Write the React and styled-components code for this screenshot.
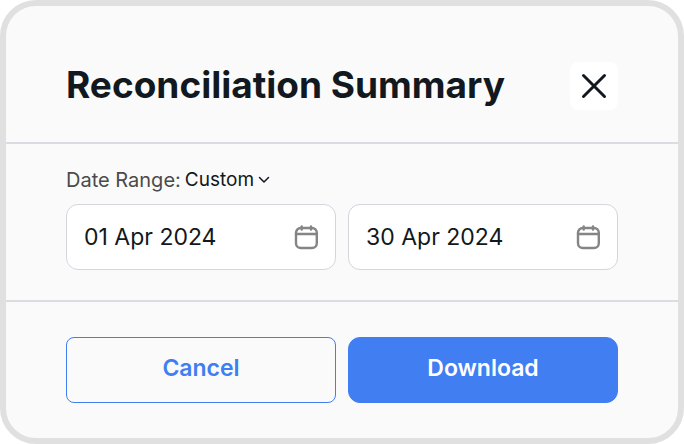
import React, { useState } from "react";
import styled, { createGlobalStyle } from "styled-components";

const GlobalStyle = createGlobalStyle`
  *, *::before, *::after { box-sizing: border-box; }
  body {
    margin: 0;
    background: #ffffff;
    color: #111820;
    font-family: Inter, "Open Sans", sans-serif;
  }
  button, input, select { font: inherit; color: inherit; }
`;

const Dialog = styled.section`
  border: 6px solid #e0e0e0;
  border-radius: 36px;
  background: #fafafa;
`;

const Header = styled.header`
  display: flex;
  align-items: flex-start;
  justify-content: space-between;
  padding: 56px 60px 32px;
  border-bottom: 2px solid #dbdbe1;
`;

const Title = styled.h1`
  margin: 0;
  font-size: 37px;
  line-height: 46px;
  font-weight: 700;
  white-space: nowrap;
`;

const CloseButton = styled.button`
  display: grid;
  place-items: center;
  width: 48px;
  height: 48px;
  padding: 0;
  border: 0;
  border-radius: 8px;
  background: #ffffff;
  cursor: pointer;
`;

const Body = styled.div`
  padding: 24px 60px 30px;
  border-bottom: 2px solid #dbdbe1;
`;

const RangeRow = styled.div`
  display: flex;
  align-items: center;
  gap: 4px;
  margin-bottom: 12px;
  font-size: 19px;
  line-height: 24px;
`;

const RangeLabel = styled.label`
  color: #4a4a4a;
  font-size: 20px;
`;

const RangePicker = styled.span`
  display: flex;
  align-items: center;
  gap: 4px;
`;

const RangeSelect = styled.select`
  appearance: none;
  field-sizing: content;
  height: 24px;
  padding: 0;
  border: 0;
  background: transparent;
  line-height: 24px;
  cursor: pointer;
`;

const Columns = styled.div`
  display: grid;
  grid-template-columns: repeat(2, minmax(0, 1fr));
  gap: 12px;
`;

const DateField = styled.div`
  display: flex;
  align-items: center;
  height: 66px;
  padding: 0 16px 0 17px;
  border: 1px solid #d5d5dd;
  border-radius: 12px;
  background: #ffffff;
`;

const DateInput = styled.input`
  flex: 1;
  min-width: 0;
  padding: 0;
  border: 0;
  outline: 0;
  background: transparent;
  font-size: 23px;
  line-height: 32px;
`;

const CalendarButton = styled.button`
  display: flex;
  padding: 0;
  border: 0;
  background: transparent;
  color: #858585;
  cursor: pointer;
`;

const Footer = styled.footer`
  padding: 35px 60px;
`;

const ActionButton = styled.button`
  height: 66px;
  padding: 0 16px 4px;
  border: 1px solid #407ef2;
  border-radius: ${({ $primary }) => ($primary ? "12px" : "8px")};
  background: ${({ $primary }) => ($primary ? "#407ef2" : "transparent")};
  color: ${({ $primary }) => ($primary ? "#ffffff" : "#407ef2")};
  font-size: 23px;
  line-height: 32px;
  font-weight: 600;
  cursor: pointer;
`;

function CloseIcon() {
  return (
    <svg width="26" height="26" viewBox="0 0 26 26" fill="none" stroke="currentColor" strokeWidth="3" strokeLinecap="round" aria-hidden="true">
      <path d="M2.5 2.5 23.5 23.5M23.5 2.5 2.5 23.5" />
    </svg>
  );
}

function ChevronIcon() {
  return (
    <svg width="12" height="8" viewBox="0 0 12 8" fill="none" stroke="currentColor" strokeWidth="1.5" strokeLinecap="round" strokeLinejoin="round" aria-hidden="true">
      <path d="m1.5 1.5 4.5 4.5 4.5-4.5" />
    </svg>
  );
}

function CalendarIcon() {
  return (
    <svg width="26" height="26" viewBox="0 0 26 26" fill="none" stroke="currentColor" strokeWidth="2.4" strokeLinecap="round" aria-hidden="true">
      <rect x="3" y="4" width="20.8" height="20" rx="4.8" />
      <path d="M3 10h20.8M8.7 2.5v3M18 2.5v3" />
    </svg>
  );
}

function DateBox({ label, initial }) {
  const [value, setValue] = useState(initial);
  return (
    <DateField>
      <DateInput aria-label={label} value={value} onChange={(e) => setValue(e.target.value)} />
      <CalendarButton type="button" aria-label={`Choose ${label.toLowerCase()}`}>
        <CalendarIcon />
      </CalendarButton>
    </DateField>
  );
}

export default function App() {
  return (
    <>
      <GlobalStyle />
      <Dialog role="dialog" aria-labelledby="summary-title">
        <Header>
          <Title id="summary-title">Reconciliation Summary</Title>
          <CloseButton type="button" aria-label="Close">
            <CloseIcon />
          </CloseButton>
        </Header>
        <Body>
          <RangeRow>
            <RangeLabel htmlFor="date-range">Date Range:</RangeLabel>
            <RangePicker>
              <RangeSelect id="date-range" defaultValue="custom">
                <option value="custom">Custom</option>
              </RangeSelect>
              <ChevronIcon />
            </RangePicker>
          </RangeRow>
          <Columns>
            <DateBox label="Start date" initial="01 Apr 2024" />
            <DateBox label="End date" initial="30 Apr 2024" />
          </Columns>
        </Body>
        <Footer>
          <Columns>
            <ActionButton type="button">Cancel</ActionButton>
            <ActionButton type="button" $primary>Download</ActionButton>
          </Columns>
        </Footer>
      </Dialog>
    </>
  );
}
